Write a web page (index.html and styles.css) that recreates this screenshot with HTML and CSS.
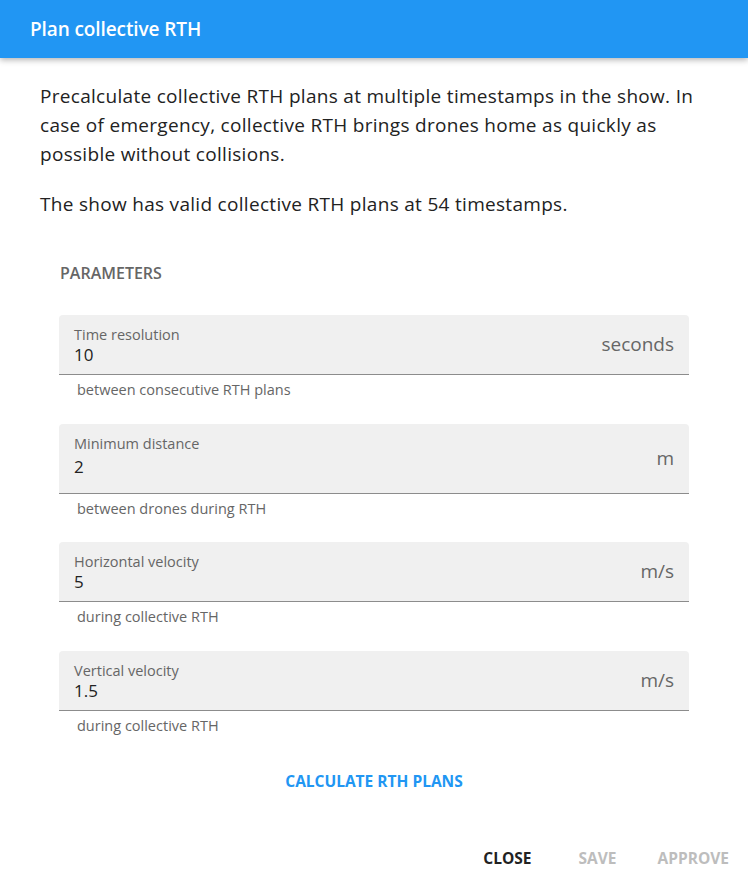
FILE: index.html
```html
<!DOCTYPE html>
<html lang="en">
<head>
    <meta charset="UTF-8">
    <meta name="viewport" content="width=device-width, initial-scale=1.0">
    <title>Plan collective RTH</title>
    <link rel="stylesheet" href="styles.css">
</head>
<body>

    <header class="dialog-title">
        <h1>Plan collective RTH</h1>
    </header>

    <main class="dialog-content">
        <p class="intro">Precalculate collective RTH plans at multiple timestamps in the show. In case of emergency, collective RTH brings drones home as quickly as possible without collisions.</p>
        <p class="intro">The show has valid collective RTH plans at <span id="plan-count">54</span> timestamps.</p>

        <section class="params">
            <h2>Parameters</h2>

            <div class="field">
                <div class="field-box">
                    <div class="field-input">
                        <label>Time resolution</label>
                        <span class="value">10</span>
                    </div>
                    <span class="unit">seconds</span>
                </div>
                <p class="helper">between consecutive RTH plans</p>
            </div>

            <div class="field field-tall">
                <div class="field-box">
                    <div class="field-input">
                        <label>Minimum distance</label>
                        <span class="value">2</span>
                    </div>
                    <span class="unit">m</span>
                </div>
                <p class="helper">between drones during RTH</p>
            </div>

            <div class="field">
                <div class="field-box">
                    <div class="field-input">
                        <label>Horizontal velocity</label>
                        <span class="value">5</span>
                    </div>
                    <span class="unit">m/s</span>
                </div>
                <p class="helper">during collective RTH</p>
            </div>

            <div class="field">
                <div class="field-box">
                    <div class="field-input">
                        <label>Vertical velocity</label>
                        <span class="value">1.5</span>
                    </div>
                    <span class="unit">m/s</span>
                </div>
                <p class="helper">during collective RTH</p>
            </div>
        </section>

        <div class="calc-row">
            <button class="btn btn-primary">Calculate RTH plans</button>
        </div>
    </main>

    <footer class="dialog-actions">
        <button class="btn btn-close">Close</button>
        <button class="btn" disabled>Save</button>
        <button class="btn" disabled>Approve</button>
    </footer>

</body>
</html>
```

FILE: styles.css
```css
body {
    font-family: "Open Sans", "Noto Sans", sans-serif;
    margin: 0;
    padding: 0;
    background: white;
    color: #222;
}

.dialog-title {
    background: #2196f3;
    height: 58px;
    padding: 0 30px;
    display: flex;
    align-items: center;
    box-shadow: 0 2px 6px rgba(0, 0, 0, 0.3);
    position: relative;
}

.dialog-title h1 {
    margin: 0;
    color: white;
    font-size: 19px;
    font-weight: 600;
    letter-spacing: -0.1px;
}

.dialog-content {
    padding: 24px 40px 0;
}

.intro {
    margin: 0 0 21px;
    font-size: 19px;
    line-height: 29px;
    letter-spacing: 0.3px;
}

.params {
    padding: 0 19px;
    margin-top: 44px;
}

.params h2 {
    margin: 0 0 32px 1px;
    font-size: 16px;
    font-weight: 600;
    line-height: 20px;
    text-transform: uppercase;
    color: #666;
}

.field {
    margin-bottom: 25px;
}

.field-box {
    background: #f0f0f0;
    border-radius: 4px 4px 0 0;
    border-bottom: 1px solid #8c8c8c;
    height: 59px;
    padding: 0 15px;
    display: flex;
    align-items: center;
    justify-content: space-between;
}

.field-input {
    display: flex;
    flex-direction: column;
    padding-top: 2px;
}

.field-input label {
    font-size: 14.5px;
    line-height: 18px;
    color: #666;
}

.field-input .value {
    font-size: 17px;
    line-height: 22px;
    color: #222;
}

.unit {
    font-size: 19px;
    color: #666;
    margin-bottom: 1px;
}

/* the distance field sits a little taller than the others */
.field-tall {
    margin-bottom: 24px;
}

.field-tall .field-box {
    height: 69px;
    align-items: flex-start;
}

.field-tall .field-input {
    padding-top: 11px;
}

.field-tall .field-input .value {
    margin-top: 3px;
}

.field-tall .unit {
    margin-top: 21px;
}

.helper {
    margin: 6px 0 0 18px;
    font-size: 14.5px;
    line-height: 18px;
    color: #666;
}

.calc-row {
    display: flex;
    justify-content: center;
    margin-top: 29px;
}

.btn {
    font-family: inherit;
    background: none;
    border: none;
    padding: 6px 8px;
    min-width: 64px;
    font-size: 15.5px;
    font-weight: 700;
    text-transform: uppercase;
    color: #222;
    cursor: pointer;
    border-radius: 4px;
}

.btn:disabled {
    color: #bdbdbd;
    cursor: default;
}

.btn-primary {
    color: #2196f3;
}

.dialog-actions {
    display: flex;
    justify-content: flex-end;
    gap: 20px;
    padding: 43px 11px 0;
}

.dialog-actions .btn-close {
    margin-right: 6px;
}
```
